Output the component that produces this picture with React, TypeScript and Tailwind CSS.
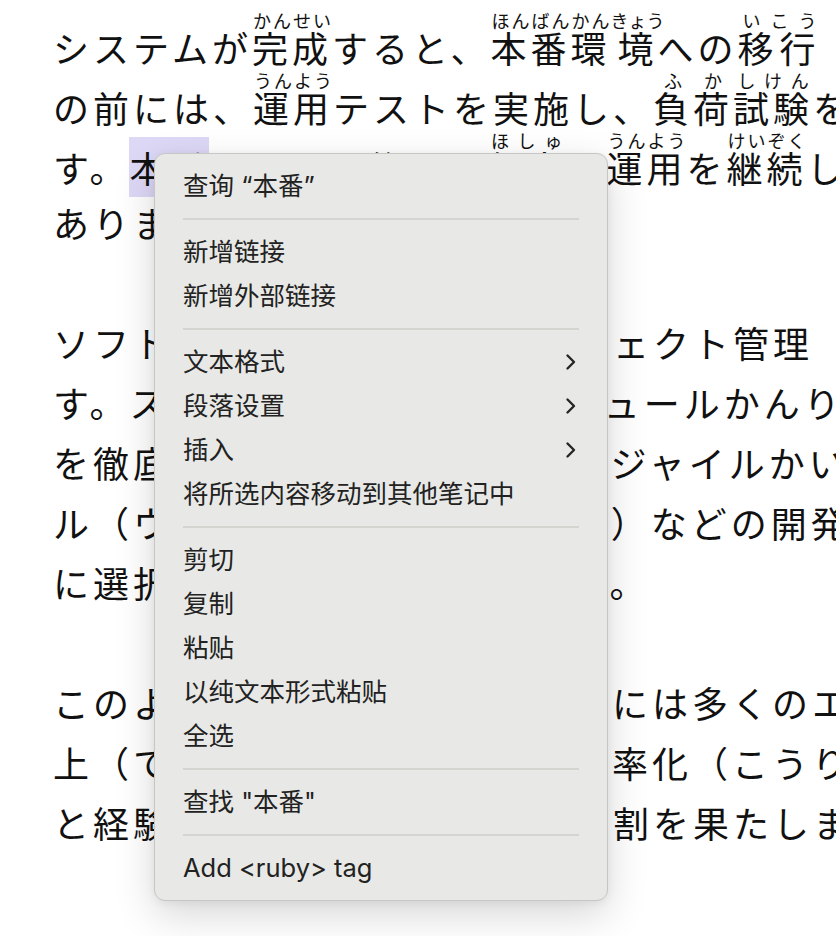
import React from "react";

const line =
  "h-[60px] leading-[60px] whitespace-nowrap tracking-[4px]";

const rtc = "leading-[18px] tracking-normal";

function R({ b, t }: { b: string; t: string }) {
  return (
    <ruby>
      {b}
      <rt className={rtc}>{t}</rt>
    </ruby>
  );
}

function Chevron() {
  return (
    <svg width="14" height="18" viewBox="0 0 14 18" className="shrink-0">
      <polyline
        points="3.5,2.5 10,9 3.5,15.5"
        fill="none"
        stroke="#262626"
        strokeWidth="2.4"
        strokeLinecap="round"
        strokeLinejoin="round"
      />
    </svg>
  );
}

function Item({ label, sub = false }: { label: string; sub?: boolean }) {
  return (
    <div className="h-[44px] flex items-center justify-between mx-[28px]">
      <span className="whitespace-nowrap">{label}</span>
      {sub && (
        <span className="mr-[1px] flex items-center">
          <Chevron />
        </span>
      )}
    </div>
  );
}

function Sep() {
  return (
    <div className="h-[22px] flex items-center mx-[28px]">
      <div className="h-[2px] w-full bg-[#d4d5d1]" />
    </div>
  );
}

export default function App() {
  return (
    <div className="relative w-[836px] h-[936px] overflow-hidden bg-white">
      <div className="pt-[12px] pl-[53px] text-[36px] text-[#111111] font-normal font-['Noto_Sans_CJK_JP',sans-serif]">
        <div className="mb-[60px]">
          <div className={line}>
            システムが
            <R b="完成" t="かんせい" />
            すると、
            <ruby>
              本番環<rt className={rtc}>ほんばんかん</rt>境
              <rt className={rtc}>きょう</rt>
            </ruby>
            への
            <ruby className="tracking-[6px]">
              移行<rt className={rtc}>いこう</rt>
            </ruby>
          </div>
          <div className={line}>
            の前には、
            <R b="運用" t="うんよう" />
            テストを実施し、
            <ruby>
              負<rt className={rtc}>ふ</rt>荷<rt className={rtc}>か</rt>試験
              <rt className={rtc}>しけん</rt>
            </ruby>
            を行いま
          </div>
          <div className={line}>
            す。
            <span className="bg-[#ded8f7] py-[4px]">本番</span>
            リリース後も、
            <R b="保守" t="ほしゅ" />
            や
            <R b="運用" t="うんよう" />
            を
            <R b="継続" t="けいぞく" />
            していく必要が
          </div>
          <div className={line}>あります。</div>
        </div>

        <div className="mb-[60px]">
          <div className={line}>ソフトウェア開発では、プロジェクト管理</div>
          <div className={line}>す。スコープの管理や、スケジュールかんり</div>
          <div className={line}>を徹底するため、スクラムやアジャイルかい</div>
          <div className={line}>ル（ウォーターフォールモデル）などの開発</div>
          <div className={line}>に選択することが最も重要です。</div>
        </div>

        <div>
          <div className={line}>このように、ソフトウェア開発には多くのエ</div>
          <div className={line}>上（てきせつな管理）や業務効率化（こうりつか）</div>
          <div className={line}>と経験（けいけん）が大きな役割を果たします</div>
        </div>
      </div>

      <div className="absolute left-[154px] top-[153px] w-[454px] rounded-[11px] border border-[#c6c7c4] bg-[#e8e9e6] py-[10px] text-[25.5px] text-[#222222] font-['Inter','Noto_Sans_CJK_SC',sans-serif] shadow-[0_14px_40px_rgba(0,0,0,0.16),0_2px_10px_rgba(0,0,0,0.06)]">
        <Item label="查询 “本番”" />
        <Sep />
        <Item label="新增链接" />
        <Item label="新增外部链接" />
        <Sep />
        <Item label="文本格式" sub />
        <Item label="段落设置" sub />
        <Item label="插入" sub />
        <Item label="将所选内容移动到其他笔记中" />
        <Sep />
        <Item label="剪切" />
        <Item label="复制" />
        <Item label="粘贴" />
        <Item label="以纯文本形式粘贴" />
        <Item label="全选" />
        <Sep />
        <Item label='查找 "本番"' />
        <Sep />
        <Item label="Add <ruby> tag" />
      </div>
    </div>
  );
}
